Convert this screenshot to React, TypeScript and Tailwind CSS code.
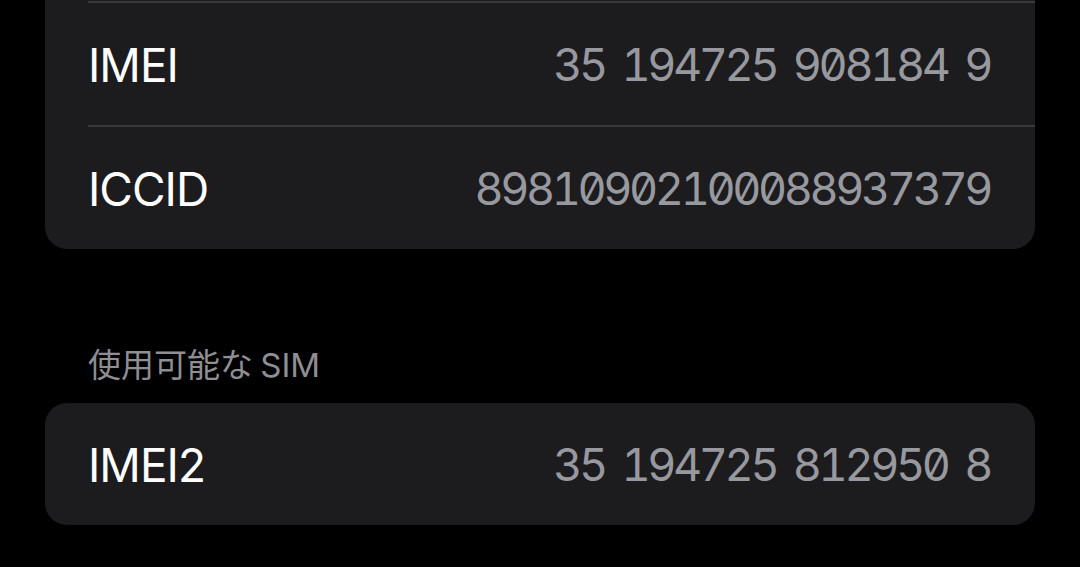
export default function App() {
  const rows = [
    { label: 'IMEI', value: '35 194725 908184 9' },
    { label: 'ICCID', value: '89810902100088937379' },
  ]

  return (
    <div
      className="w-[1080px] h-[567px] overflow-hidden bg-black px-[45px]"
      style={{ fontFamily: 'Inter, "Noto Sans CJK JP", sans-serif' }}
    >
      {/* card whose first row is scrolled off the top */}
      <div className="-mt-[121px] rounded-[22px] bg-[#1c1c1e]">
        <div className="h-[122px]" />
        {rows.map((row) => (
          <div key={row.label} className="pl-[43px]">
            <div className="h-[2px] bg-[#38383a]" />
            <div className="flex h-[122px] items-center justify-between pr-[45px] pt-[2px]">
              <span className="text-[46px] text-white tracking-[-1px]">{row.label}</span>
              <span className="text-[45px] text-[#98989f] tabular-nums slashed-zero tracking-[-3.4px] [word-spacing:8px]">
                {row.value}
              </span>
            </div>
          </div>
        ))}
      </div>

      <div className="mt-[100px] pl-[43px] text-[33px] text-[#8e8e93] leading-none [word-spacing:-2px]">
        使用可能な SIM
      </div>

      <div className="mt-[21px] rounded-[22px] bg-[#1c1c1e]">
        <div className="flex h-[122px] items-center justify-between pl-[43px] pr-[45px] pt-[2px]">
          <span className="text-[46px] text-white tracking-[-1px]">IMEI2</span>
          <span className="text-[45px] text-[#98989f] tabular-nums slashed-zero tracking-[-3.4px] [word-spacing:8px]">
            35 194725 812950 8
          </span>
        </div>
      </div>
    </div>
  )
}
